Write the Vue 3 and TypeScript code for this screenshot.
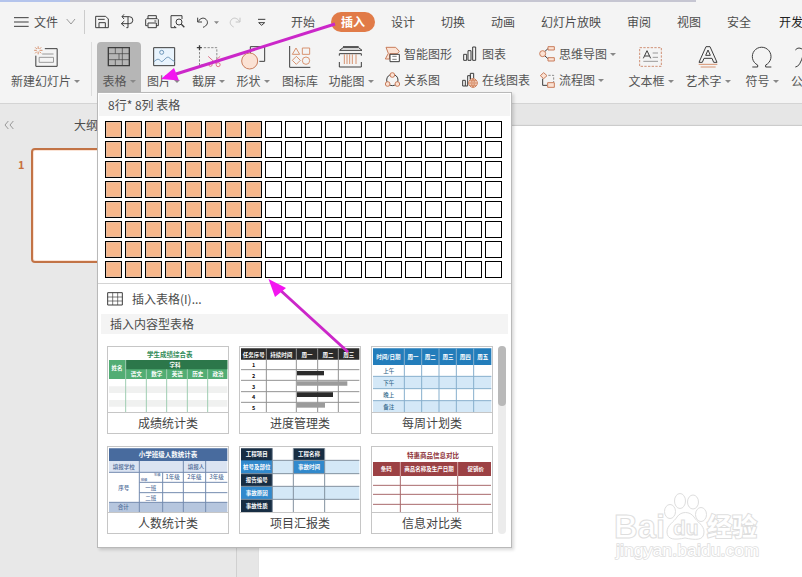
<script setup lang="ts">
type Shape = [d: string, cls?: string]
interface Icon { box: string; w: number; h: number; shapes: Shape[] }
interface Command { label: string; icon: Icon; caret?: boolean; kind: string }
interface Mark { x: number; y: number; t: string; cls?: string }
interface Template { name: string; box: string; shapes: Shape[]; marks: Mark[] }

const circle = (x: number, y: number, r: number) =>
  `M${x - r} ${y}a${r} ${r} 0 1 0 ${2 * r} 0a${r} ${r} 0 1 0 ${-2 * r} 0z`
const rect = (x: number, y: number, w: number, h: number) => `M${x} ${y}h${w}v${h}h${-w}z`

const quick = (x: number, w: number, shapes: Shape[]): Icon => ({ box: `${x} 27 ${w * 3} 72`, w, h: 24, shapes })
const large = (x: number, shapes: Shape[]): Icon => ({ box: `${x} 132 84 78`, w: 28, h: 26, shapes })
const small = (x: number, y: number, shapes: Shape[]): Icon => ({ box: `${x} ${y} 54 54`, w: 18, h: 18, shapes })

const quickIcons: Icon[] = [
  quick(270, 25, [['M287 80V46h30l8 8v26zM297 80V65h19v15M294 55h20']]),
  quick(345, 25, [['M366 47h22a10.500 10.500 0 0 1 0 21h-24M373 60l-9 8 9 8M379 80h5V48M372 40l-6 7 6 7']]),
  quick(420, 25, [['M444 53V44h25v9M443 74h-6V56l3-3h32l3 3v18h-7M444 66h25v14h-25zM463 60h6']]),
  quick(495, 25, [['M529 80h-16V44h33v10M528 80l-6-5'], [circle(537, 63, 9)], ['M544 70l9 9', 'bold']]),
  quick(570, 32, [['M593 50v13h13M594 62c8-12 17-13 24-7 9 9 3 20-9 24'], ['M642 61h15l-7.5 8z', 'solid']]),
  quick(666, 25, [['M720 50v13h-13M719 62c-8-12-17-13-24-7-8 9-4 18 6 23', 'pale']]),
  quick(741, 31, [['M774 55h22M776 65l9 8 9-8z']]),
]

const tabs = ['开始', '插入', '设计', '切换', '动画', '幻灯片放映', '审阅', '视图', '安全', '开发']

const leftCommands: Command[] = [
  { label: '新建幻灯片', caret: true, kind: 'new', icon: large(93.5, [
    ['M132 146h37v53h-64v-32'], ['M124 162h34M115 172h43v15h-43z', 'grey'],
    ['M112 139v8M112 155v8M100 151h8M116 151h9M103 142l5 5M116 155l5 5M121 142l-5 5M108 155l-5 5', 'orange']]) },
  { label: '表格', caret: true, kind: 'table', icon: large(312, [
    [rect(322, 143, 63, 54), 'bold'], ['M322 161h63M322 179h63M343 143v18M364 143v36M343 179v18M354 161v18M364 179v18', 'thin']]) },
  { label: '图片', caret: true, kind: 'picture', icon: large(447, [
    [rect(458, 143, 63, 54), 'sky'], [circle(482, 157, 6), 'blue'], ['M459 185c10-9 14-10 22 0 8-1 14-16 22-13 8 5 9 9 18 12', 'blue']]) },
  { label: '截屏', caret: true, kind: 'capture', icon: large(583.5, [
    ['M597 136v15M589 143h15', 'bold'], ['M610 143h39v40M597 156v39h20', 'dash'],
    ['M623 169l24 22M659 169l-24 22', 'red'], [circle(630, 194, 5), 'red'], [circle(653, 194, 6), 'red']]) },
  { label: '形状', caret: true, kind: 'shape', icon: large(717, [
    ['M751 160v-20h43v44h-16'], [circle(749, 183, 24), 'peach']]) },
  { label: '图标库', kind: 'library', icon: large(63, [
    ['M74 138v64h62'], ['M93 144l11 19H82zM112 144h22v19h-22zM94 169l12 12-12 12-12-12z', 'orange'], [circle(123, 182, 11), 'orange']]) },
  { label: '功能图', caret: true, kind: 'function', icon: large(216, [
    ['M234 140h47M224 151h67l-10-8h-47z'], ['M223 167v-6h66v6M223 186v15h66v-15'], ['M238 163v29M246 163v29M254 163v29M262 163v29M273 163v29', 'orange']]) },
]

const pairs: Command[][] = [
  [
    { label: '智能图形', kind: '', icon: small(354, 135, [['M363 142h29l11 12-6 7h-23v16h-13l9-17z', 'peach'], [rect(375, 163, 28, 22), 'white'], ['M382 169h13M382 178h13', 'thin']]) },
    { label: '关系图', kind: '', icon: small(354, 213, [[circle(382, 240, 17)], [circle(382, 225, 7), 'peach'], [circle(368, 252, 7), 'peach'], [circle(397, 252, 7), 'peach']]) },
  ],
  [
    { label: '图表', kind: '', icon: small(588, 135, [[rect(596, 163, 9, 18)], [rect(609, 152, 9, 29)], [rect(623, 141, 9, 40)]]) },
    { label: '在线图表', kind: '', icon: small(588, 213, [['M601 258h-8v-17h8v17h7v-31h8v15M616 237v-17h10v16'], [circle(624, 249, 13), 'peach'], ['M611 249h26M624 236v26M614 242h20M614 256h20M624 236q-12 13 0 26q12-13 0-26', 'orange']]) },
  ],
  [
    { label: '思维导图', caret: true, kind: '', icon: small(18, 135, [['M39 154l11-10M39 168l11 10'], [circle(32, 161, 9), 'peach'], [rect(48, 140, 19, 10), 'peach'], [rect(48, 173, 19, 10), 'peach']]) },
    { label: '流程图', caret: true, kind: '', icon: small(18, 213, [['M32 236v20h14'], ['M49 226h16v20', 'dash'], ['M35 218l10 9-10 9-10-9z', 'peach'], [rect(47, 248, 20, 14), 'peach']]) },
  ],
]

const rightCommands: Command[] = [
  { label: '文本框', caret: true, kind: 'textbox', icon: large(315, [[rect(323, 143, 65, 56), 'dash warm'], ['M334 175l11-23 11 23M338 168h14'], ['M362 159h16M362 172h16M334 184h44', 'grey']]) },
  { label: '艺术字', caret: true, kind: 'wordart', icon: large(486, [['M501 187l21-47h12l21 47h-10l-5-12h-24l-5 12zM521 166h14l-7-16z'], ['M500 193h56M506 201h45', 'orange']]) },
  { label: '符号', caret: true, kind: 'symbol', icon: large(648, [['M661 201h16v-6a28 28 0 1 1 24 0v6h17']]) },
  { label: '公', kind: 'formula', icon: large(777, [['M790 150q10-12 24 0M790 201q14 0 24-38']]) },
]

const tableIcon: Icon = { box: '33 75 54 54', w: 18, h: 18, shapes: [[rect(38, 83, 44, 37)], ['M38 96h44M38 108h44M53 83v37M68 83v37', 'thin']] }

const marksRow = (y: number, cls: string, items: [number, string][]): Mark[] => items.map(([x, t]) => ({ x, y, t, cls }))

const templates: Template[] = [
  { name: '成绩统计类', box: '24 21 360 195', shapes: [
    [rect(27, 60, 355, 57), 'f-green'], [rect(77, 60, 305, 28), 'f-forest'], [rect(27, 139, 355, 20), 'f-light'], [rect(27, 180, 355, 20), 'f-light'],
    ['M77 60v157M139 88v129M200 88v129M262 88v129M323 88v129', 's-green']],
    marks: [{ x: 209, y: 50, t: '学生成绩综合表', cls: 'big t-green' }, { x: 51, y: 91, t: '姓名' }, { x: 225, y: 80, t: '学科' },
      ...marksRow(109, '', [[109, '语文'], [170, '数学'], [232, '英语'], [293, '历史'], [354, '政治']])] },
  { name: '进度管理类', box: '24 21 360 195', shapes: [
    [rect(27, 25, 355, 34), 'f-black'], ['M27 89h355M27 121h355M27 155h355M27 187h355M103 25v191M193 25v191M257 25v191M319 25v191', 's-grey'],
    [rect(195, 93, 81, 13), 'f-black'], [rect(195, 124, 151, 13), 'f-grey'], [rect(195, 157, 108, 14), 'f-black'], [rect(195, 189, 84, 14), 'f-grey']],
    marks: [...marksRow(50, '', [[65, '任务序号'], [148, '持续时间'], [225, '周一'], [288, '周二'], [350, '周三']]),
      ...[1, 2, 3, 4, 5].map((n) => ({ x: 65, y: 50 + n * 32, t: String(n), cls: 't-black' }))] },
  { name: '每周计划类', box: '21 21 360 195', shapes: [
    [rect(24, 25, 355, 50), 'f-blue'], [rect(24, 109, 355, 37), 'f-sky'], [rect(24, 182, 355, 34), 'f-sky'],
    ['M24 109h355M24 146h355M24 182h355M118 25v191M170 25v191M222 25v191M274 25v191M326 25v191', 's-blue']],
    marks: [...marksRow(57, '', [[70, '时间/日期'], [144, '周一'], [196, '周二'], [249, '周三'], [301, '周四'], [353, '周五']]),
      ...['上午', '下午', '晚上', '备注'].map((t, i) => ({ x: 71, y: 99 + i * 36, t, cls: 't-navy' }))] },
  { name: '人数统计类', box: '24 21 360 195', shapes: [
    [rect(27, 25, 355, 38), 'f-steel'], [rect(27, 63, 355, 34), 'f-mist'], [rect(27, 187, 355, 29), 'f-dusk'],
    ['M27 97h355M118 127h264M118 158h264M27 187h355M118 63v153M188 97v119M250 63v153M317 63v153', 's-steel']],
    marks: [{ x: 204, y: 51, t: '小学班级人数统计表', cls: 'big' }, ...marksRow(87, 't-steel', [[71, '填报学校'], [288, '填报人']]),
      { x: 172, y: 109, t: '年级', cls: 'tiny t-steel' }, { x: 132, y: 122, t: '班级', cls: 'tiny t-steel' },
      ...marksRow(117, 't-steel', [[218, '1年级'], [283, '2年级'], [350, '3年级']]),
      { x: 71, y: 151, t: '序号', cls: 't-steel' }, { x: 152, y: 150, t: '一班', cls: 't-steel' }, { x: 152, y: 180, t: '二班', cls: 't-steel' }, { x: 70, y: 208, t: '合计', cls: 't-steel' }] },
  { name: '项目汇报类', box: '24 21 360 195', shapes: [
    [rect(27, 25, 94, 191), 'f-navy'], [rect(184, 25, 94, 36), 'f-navy'], [rect(121, 61, 261, 40), 'f-sky'], [rect(121, 139, 261, 39), 'f-sky'],
    [rect(27, 61, 94, 40), 'f-azure'], [rect(184, 61, 94, 40), 'f-azure'], [rect(27, 139, 94, 39), 'f-azure'],
    ['M121 61h261M27 101h355M27 139h355M27 178h355M121 25v191M184 25v191M278 25v191', 's-navy']],
    marks: [...['工程项目', '桩号及部位', '报告编号', '事故原因', '事故性质'].map((t, i) => ({ x: 74, y: 49 + i * 38.5, t })),
      { x: 231, y: 49, t: '工程名称' }, { x: 231, y: 87, t: '事故时间' }] },
  { name: '信息对比类', box: '420 21 360 195', shapes: [
    [rect(423, 66, 354, 42), 'f-red'], ['M423 136h354M423 163h354M423 193h354M505 108v108M677 108v108', 's-red'], ['M505 66v42M677 66v42', 's-white']],
    marks: [{ x: 603, y: 53, t: '特惠商品信息对比', cls: 'big t-red' }, ...marksRow(94, '', [[463, '条码'], [591, '商品名称及生产日期'], [731, '促销价']])] },
]
</script>

<template>
  <div class="app">
    <div class="strip"><i class="strip-active"></i><i class="strip-rest"></i></div>
    <header class="bar">
      <div class="file">
        <svg class="ic" width="15" height="12" viewBox="41 44 45 36"><path d="M41 49h44M41 62h44M41 75h44" /></svg>
        <span>文件</span>
        <svg class="ic chevron" width="10" height="7" viewBox="198 52 30 21"><path class="grey" d="M200 55l13 15 12-15" /></svg>
      </div>
      <div class="quick">
        <svg v-for="(q, i) in quickIcons" :key="i" class="ic" :width="q.w" :height="q.h" :viewBox="q.box">
          <path v-for="(s, k) in q.shapes" :key="k" :d="s[0]" :class="s[1]" />
        </svg>
      </div>
      <nav class="tabs">
        <span v-for="t in tabs" :key="t" class="tab" :class="{ active: t === '插入', wide: t.length === 5 }"><b>{{ t }}</b></span>
      </nav>
    </header>

    <section class="ribbon">
      <div v-for="c in leftCommands" :key="c.label" class="cmd" :class="c.kind">
        <svg class="ic" :width="c.icon.w" :height="c.icon.h" :viewBox="c.icon.box">
          <path v-for="(s, k) in c.icon.shapes" :key="k" :d="s[0]" :class="s[1]" />
        </svg>
        <span class="label">{{ c.label }}<i v-if="c.caret" class="caret"></i></span>
      </div>
      <div v-for="(p, n) in pairs" :key="n" class="pair">
        <div v-for="c in p" :key="c.label" class="row">
          <svg class="ic" :width="c.icon.w" :height="c.icon.h" :viewBox="c.icon.box">
            <path v-for="(s, k) in c.icon.shapes" :key="k" :d="s[0]" :class="s[1]" />
          </svg>
          <span class="label">{{ c.label }}<i v-if="c.caret" class="caret"></i></span>
        </div>
      </div>
      <div v-for="c in rightCommands" :key="c.label" class="cmd" :class="c.kind">
        <svg class="ic" :width="c.icon.w" :height="c.icon.h" :viewBox="c.icon.box">
          <path v-for="(s, k) in c.icon.shapes" :key="k" :d="s[0]" :class="s[1]" />
        </svg>
        <span class="label">{{ c.label }}<i v-if="c.caret" class="caret"></i></span>
      </div>
    </section>

    <main class="work">
      <aside class="outline">
        <div class="outline-head">
          <svg class="ic" width="11" height="10" viewBox="13 91 33 30"><path class="grey" d="M26 94l-10 12 10 12M41 94l-10 12 10 12" /></svg>
          <span>大纲</span>
        </div>
        <div class="slide-row"><b>1</b><div class="slide"></div></div>
      </aside>
      <div class="canvas"><div class="page"></div></div>
    </main>

    <div class="menu">
      <div class="size">8行* 8列 表格</div>
      <div class="cells"><i v-for="n in 160" :key="n" :class="{ on: (n - 1) % 20 < 8 }"></i></div>
      <div class="insert">
        <svg class="ic" :width="tableIcon.w" :height="tableIcon.h" :viewBox="tableIcon.box">
          <path v-for="(s, k) in tableIcon.shapes" :key="k" :d="s[0]" :class="s[1]" />
        </svg>
        <span>插入表格(I)...</span>
      </div>
      <div class="heading">插入内容型表格</div>
      <div class="gallery">
        <div class="cards">
          <div v-for="t in templates" :key="t.name" class="card">
            <svg class="thumb" width="120" height="65" :viewBox="t.box">
              <path v-for="(s, k) in t.shapes" :key="k" :d="s[0]" :class="s[1]" />
              <text v-for="(m, k) in t.marks" :key="k" :x="m.x" :y="m.y" :class="m.cls">{{ m.t }}</text>
            </svg>
            <div class="name">{{ t.name }}</div>
          </div>
        </div>
        <div class="track"><div class="grip"></div></div>
      </div>
    </div>

    <svg class="arrows" width="802" height="577" viewBox="0 0 802 577">
      <path class="shaft" d="M335 24L176 74M348 352L279 289" />
      <path class="head" d="M161 79l13-11 5 12.500zM268.500 279l17.500 9-11 9z" />
    </svg>

    <svg class="brand" width="170" height="80" viewBox="0 0 170 80">
      <text x="14" y="56" class="b-big" textLength="51" lengthAdjust="spacingAndGlyphs">Bai</text>
      <ellipse cx="70" cy="29.500" rx="5.500" ry="7" /><ellipse cx="80" cy="19" rx="5.500" ry="7.500" />
      <ellipse cx="93" cy="20" rx="5.500" ry="7" /><ellipse cx="101" cy="32.500" rx="5.500" ry="7" />
      <path d="M67 50c0-7 7-10 10-15 4-6 13-6 17 0 3 5 10 8 10 15 0 9-9 8-19 6-10 2-18 2-18-6z" />
      <text x="73" y="53" class="b-du">du</text>
      <text x="107" y="54" class="b-cjk">经验</text>
      <text x="16" y="74" class="b-url" textLength="143" lengthAdjust="spacingAndGlyphs">jingyan.baidu.com</text>
    </svg>
  </div>
</template>

<style>
html, body { margin: 0; overflow: hidden; }
</style>

<style scoped>
.app { position: relative; display: flex; flex-direction: column; width: 802px; height: 577px; overflow: hidden; background: #f4f4f4; color: #4c4c4c; font: 12px/16px "Noto Sans CJK SC", sans-serif; }
.strip { display: flex; flex: none; height: 2px; }
.strip-active { width: 70px; background: #b4c4ec; }
.strip-rest { width: 626px; background: #c6c6d2; }
.bar { display: flex; flex: none; height: 39px; align-items: center; }
.file { display: flex; flex: none; align-items: center; width: 85px; height: 24px; box-sizing: border-box; padding-left: 14px; border-right: 1px solid #ccc; white-space: nowrap; }
.file span { margin-left: 5px; }
.chevron { margin-left: 8px; }
.quick { display: flex; flex: none; margin-left: 5px; }
.tabs { display: flex; flex: none; white-space: nowrap; }
.tab { display: flex; justify-content: center; width: 50px; }
.tab.wide { width: 86px; }
.tab:last-child { justify-content: flex-start; padding-left: 15px; color: #222; }
.tab b { font-weight: 400; }
.tab.active b { width: 44px; text-align: center; border-radius: 10px; line-height: 20px; margin: -2px 0; background: #e17b48; color: #fff; font-weight: 700; }

.ic { display: block; flex: none; fill: none; stroke: #3d3d3d; stroke-width: 3; }
.ic .bold { stroke-width: 4; }
.ic .thin { stroke-width: 2; }
.ic .grey { stroke: #888; stroke-width: 2.500; }
.ic .pale { stroke: #c4c4c4; }
.ic .solid { fill: #888; stroke: none; }
.ic .orange { stroke: #d58b65; stroke-width: 2.800; }
.ic .peach { stroke: #c97d5c; fill: #fbe2d4; }
.ic .white { fill: #fff; }
.ic .sky { fill: #e9f4fd; }
.ic .blue { stroke: #6d96b9; }
.ic .red { stroke: #e0728a; }
.ic .dash { stroke: #777; stroke-dasharray: 7 4; stroke-width: 2.500; }
.ic .dash.warm { stroke: #c97d5c; }

.ribbon { display: grid; flex: none; height: 63px; grid-template-columns: 92px 49px 45px 45px 44px 50px 52px 78px 77px 91px 56px 58px 50px 44px; border-bottom: 1px solid #d4d4d4; box-sizing: border-box; padding-top: 1px; }
.cmd { display: flex; flex-direction: column; align-items: center; box-sizing: border-box; height: 51px; padding-top: 2px; }
.cmd.new { height: 54px; border-right: 1px solid #ddd; }
.cmd.table { margin-left: 5px; background: #b6b6b6; border-radius: 4px 4px 0 0; }
.label { display: flex; align-items: center; white-space: nowrap; color: #555; }
.cmd .label { margin-top: 3px; }
.cmd.formula { align-items: flex-start; padding-left: 4px; }
.caret { margin-left: 3px; border: 3px solid transparent; border-top: 3px solid #888; border-bottom: 0; }
.pair { padding: 3px 0 0 6px; }
.row { display: flex; align-items: center; gap: 3px; height: 18px; margin-bottom: 8px; }

.work { display: flex; flex: 1; background: #e6e6e6; }
.outline { flex: none; width: 237px; box-sizing: border-box; border-right: 1px solid #d0d0d0; background: #e8e8e8; padding-top: 12px; }
.outline-head { display: flex; align-items: center; padding-left: 4px; height: 18px; }
.outline-head span { margin-left: 59px; }
.slide-row { display: flex; margin-top: 14px; }
.slide-row b { width: 31px; box-sizing: border-box; padding: 9px 0 0 18px; color: #c8703e; font-size: 11px; line-height: 14px; }
.slide { width: 190px; height: 111px; border: 2px solid #c27346; border-radius: 4px; background: #fff; box-shadow: inset 0 0 0 1px #fbe3d5; }
.canvas { flex: 1; padding: 22px 0 0 22px; display: flex; }
.page { flex: 1; background: #fff; box-shadow: 0 -1px 1px #ccc; }

.menu { position: absolute; left: 97px; top: 92px; width: 415px; height: 456px; box-sizing: border-box; border: 1px solid #b9b9b9; background: #fff; box-shadow: 2px 2px 3px rgba(0, 0, 0, .15); }
.size { height: 22px; margin: 1px 1px 0; padding-left: 9px; background: #f4f4f4; line-height: 22px; }
.cells { display: grid; grid-template-columns: repeat(20, 17px); grid-auto-rows: 17px; gap: 3px; padding: 5px 0 5px 7px; border-bottom: 1px solid #d4d4d4; }
.cells i { box-sizing: border-box; border: 1px solid #000; background: #fff; }
.cells i.on { background: #f7b78b; box-shadow: inset 0 0 0 1px #e8bda0; }
.insert { display: flex; align-items: center; height: 30px; padding-left: 8px; gap: 8px; }
.heading { margin: 0 3px; padding-left: 9px; height: 20px; line-height: 20px; background: #f4f4f4; }
.gallery { display: flex; padding: 12px 0 0 9px; }
.cards { display: grid; grid-template-columns: repeat(3, 122px); grid-auto-rows: 88px; gap: 12px 10px; }
.card { box-sizing: border-box; border: 1px solid #c6c6c6; }
.thumb { display: block; }
.name { border-top: 1px solid #c6c6c6; text-align: center; line-height: 20px; color: #444; }
.track { width: 8px; height: 188px; margin-left: 5px; border-radius: 4px; background: #ececec; }
.grip { height: 60px; border-radius: 4px; background: #b9b9b9; }

.thumb text { font-size: 16.500px; font-weight: 700; text-anchor: middle; fill: #fff; }
.thumb text.big { font-size: 19.500px; }
.thumb text.tiny { font-size: 10px; }
.thumb text.t-green { fill: #2d8a55; }
.thumb text.t-black { fill: #111; }
.thumb text.t-navy { fill: #33688c; font-weight: 500; }
.thumb text.t-steel { fill: #4f6c98; font-weight: 500; }
.thumb text.t-red { fill: #8d2f35; }
.f-green { fill: #52ad74; } .f-forest { fill: #2c774a; } .f-light { fill: #f0f1f0; }
.f-black { fill: #2b2b2b; } .f-grey { fill: #9b9b9b; } .f-blue { fill: #237dbb; }
.f-sky { fill: #d4e8f7; } .f-steel { fill: #486b9e; } .f-mist { fill: #dbe4f2; }
.f-dusk { fill: #b6c6de; } .f-navy { fill: #172d43; } .f-azure { fill: #3189cc; } .f-red { fill: #9c4144; }
.s-green { stroke: #9fceb2; stroke-width: 3; } .s-grey { stroke: #929292; stroke-width: 3; }
.s-blue { stroke: #86afcd; stroke-width: 3; } .s-steel { stroke: #748baf; stroke-width: 3; }
.s-navy { stroke: #82919f; stroke-width: 3; } .s-red { stroke: #a9696b; stroke-width: 3; } .s-white { stroke: #d6a5a7; stroke-width: 3; }

.arrows { position: absolute; inset: 0; pointer-events: none; }
.shaft { stroke: #cb27c9; stroke-width: 3; }
.head { fill: #f315f0; }
.brand { position: absolute; left: 600px; top: 482px; fill: #fff; stroke: #dedede; stroke-width: 1; }
.brand text { font-family: "Liberation Sans", sans-serif; }
.b-big { font-size: 33px; font-weight: 700; }
.b-du { font-size: 21px; font-weight: 700; }
.brand .b-cjk { font: 700 25px "Noto Sans CJK SC", sans-serif; paint-order: stroke; stroke-width: 2; }
.brand .b-url { font-size: 17px; paint-order: stroke; stroke-width: 1.500; }
</style>
